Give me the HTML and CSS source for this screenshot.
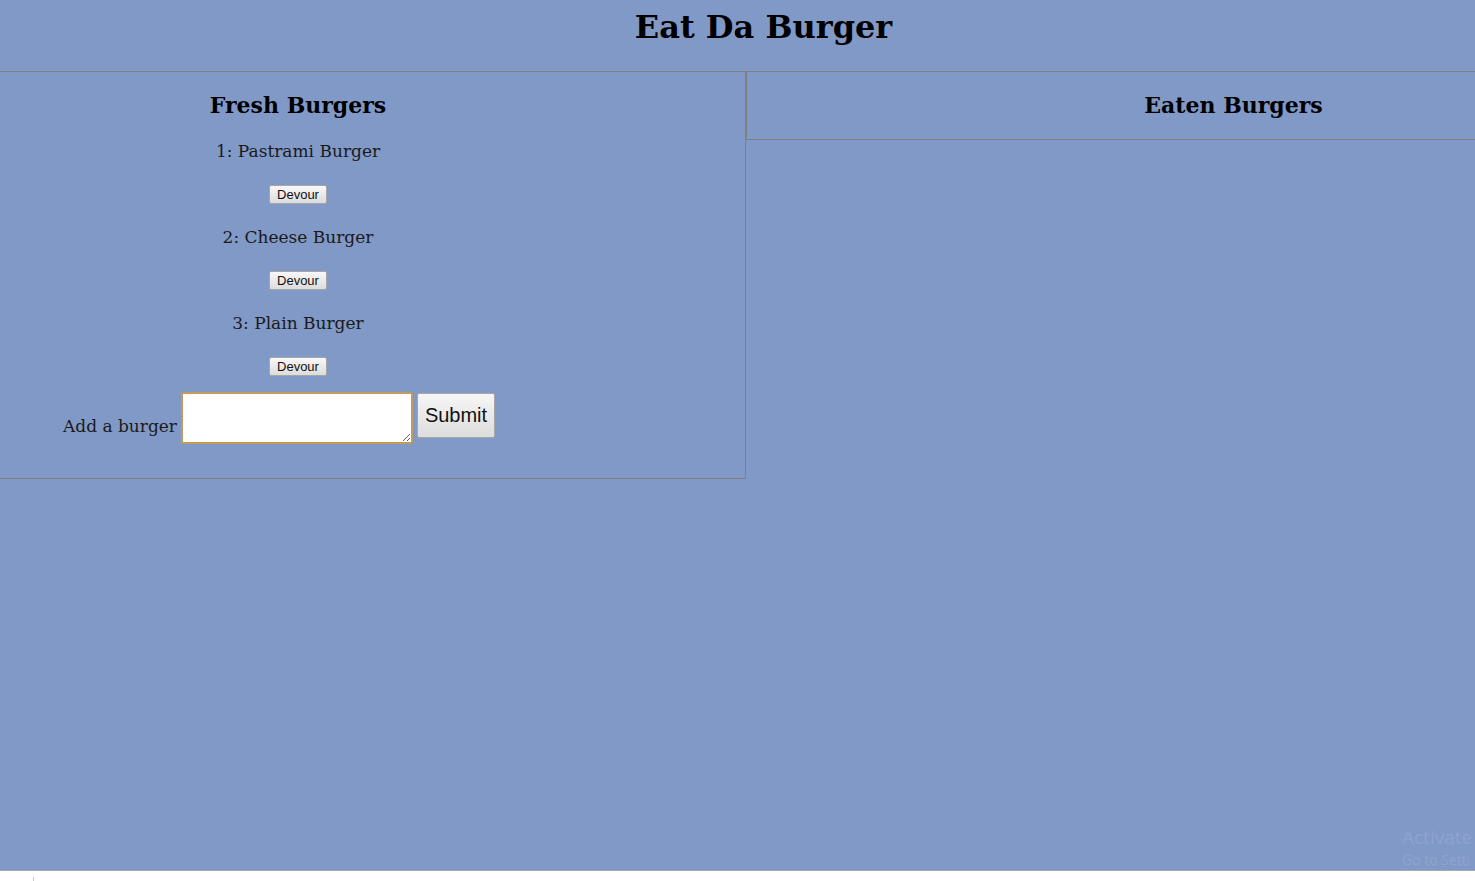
FILE: index.html
```html
<!DOCTYPE html>
<html>
<head>
<meta charset="utf-8">
<link rel="stylesheet" href="styles.css">
</head>
<body>
<div class="screen">
  <header class="top">
    <h1 class="title">Eat Da Burger</h1>
  </header>
  <div class="panels">
    <section class="fresh">
      <div class="fresh-inner">
        <h2 class="panel-title">Fresh Burgers</h2>
        <div class="item">
          <p class="item-name">1: Pastrami Burger</p>
          <button class="devour">Devour</button>
        </div>
        <div class="item">
          <p class="item-name">2: Cheese Burger</p>
          <button class="devour">Devour</button>
        </div>
        <div class="item">
          <p class="item-name">3: Plain Burger</p>
          <button class="devour">Devour</button>
        </div>
      </div>
      <form class="add-form">
        <label class="add-label" for="burger">Add a burger</label>
        <textarea id="burger" class="add-input" autofocus></textarea>
        <button type="button" class="submit">Submit</button>
      </form>
    </section>
    <section class="eaten">
      <div class="eaten-head">
        <h2 class="panel-title">Eaten Burgers</h2>
      </div>
    </section>
  </div>
  <div class="watermark">
    <div class="wm-big">Activate</div>
    <div class="wm-small">Go to Setti</div>
  </div>
</div>
<div class="taskbar"><span class="tick"></span></div>
</body>
</html>
```

FILE: styles.css
```css
html, body {
  margin: 0;
  padding: 0;
  background: #ffffff;
  overflow: hidden;
}
body {
  width: 1475px;
  height: 881px;
  font-family: "DejaVu Serif", Georgia, serif;
  color: #111;
}
.screen {
  position: relative;
  height: 870px;
  background: #8199c7;
  overflow: hidden;
}
.top {
  height: 71px;
  border-bottom: 1px solid #808080;
}
.title {
  margin: 0;
  padding: 7px 0 0 52px;
  text-align: center;
  font-size: 32px;
  line-height: 40px;
  font-weight: bold;
  color: #000;
}
.panels {
  display: flex;
  align-items: flex-start;
}
.fresh {
  width: 745px;
  border-right: 1px solid #808080;
  border-bottom: 1px solid #808080;
  padding-bottom: 34px;
}
.fresh-inner {
  width: 596px;
  display: flex;
  flex-direction: column;
  align-items: center;
}
.panel-title {
  margin: 18px 0 0;
  font-size: 22px;
  line-height: 30px;
  font-weight: bold;
  color: #000;
  text-align: center;
}
.item {
  display: flex;
  flex-direction: column;
  align-items: center;
}
.item-name {
  margin: 22px 0 0;
  font-size: 17px;
  line-height: 22px;
  color: #1a1a1a;
}
.item:first-of-type .item-name {
  margin-top: 20px;
}
.devour {
  margin: 23px 0 0;
  width: 58px;
  height: 19px;
  padding: 0;
  font-family: "Liberation Sans", Arial, sans-serif;
  font-size: 13px;
  color: #111;
  background: linear-gradient(#f8f8f8, #dcdcdc);
  border: 1px solid #a6a6a6;
  border-radius: 2px;
}
.add-form {
  display: flex;
  align-items: flex-start;
  margin: 16px 0 0 58px;
}
.add-label {
  flex: none;
  width: 119px;
  margin-right: 4px;
  text-align: right;
  white-space: nowrap;
  font-size: 17px;
  line-height: 24px;
  margin-top: 22px;
  color: #1a1a1a;
}
.add-input {
  flex: none;
  width: 232px;
  height: 52px;
  box-sizing: border-box;
  margin: 0;
  border: 2px solid #c49a58;
  border-radius: 2px;
  background: #fff;
  resize: both;
  outline: none;
  caret-color: #000;
}
.submit {
  flex: none;
  margin: 1px 0 0 4px;
  width: 78px;
  height: 45px;
  padding: 0;
  font-family: "Liberation Sans", Arial, sans-serif;
  font-size: 20px;
  color: #111;
  background: linear-gradient(#f6f6f6, #dddddd);
  border: 1px solid #a6a6a6;
  border-radius: 2px;
}
.eaten {
  flex: 1;
}
.eaten-head {
  border-left: 1px solid #808080;
  border-bottom: 1px solid #808080;
  height: 67px;
  padding-left: 245px;
  display: flex;
  align-items: flex-start;
  justify-content: center;
}
.watermark {
  position: absolute;
  right: 0;
  top: 824px;
  width: 73px;
  white-space: nowrap;
  overflow: hidden;
  font-family: "Open Sans", "Noto Sans", sans-serif;
  color: #8fa3cf;
}
.wm-big {
  font-size: 19px;
  line-height: 26px;
}
.wm-small {
  font-size: 14px;
  line-height: 20px;
}
.taskbar {
  height: 10px;
  border-top: 1px solid #a8a8a8;
  background: #fff;
  position: relative;
}
.tick {
  position: absolute;
  left: 33px;
  top: 6px;
  width: 1px;
  height: 5px;
  background: #c8c8c8;
}
```
